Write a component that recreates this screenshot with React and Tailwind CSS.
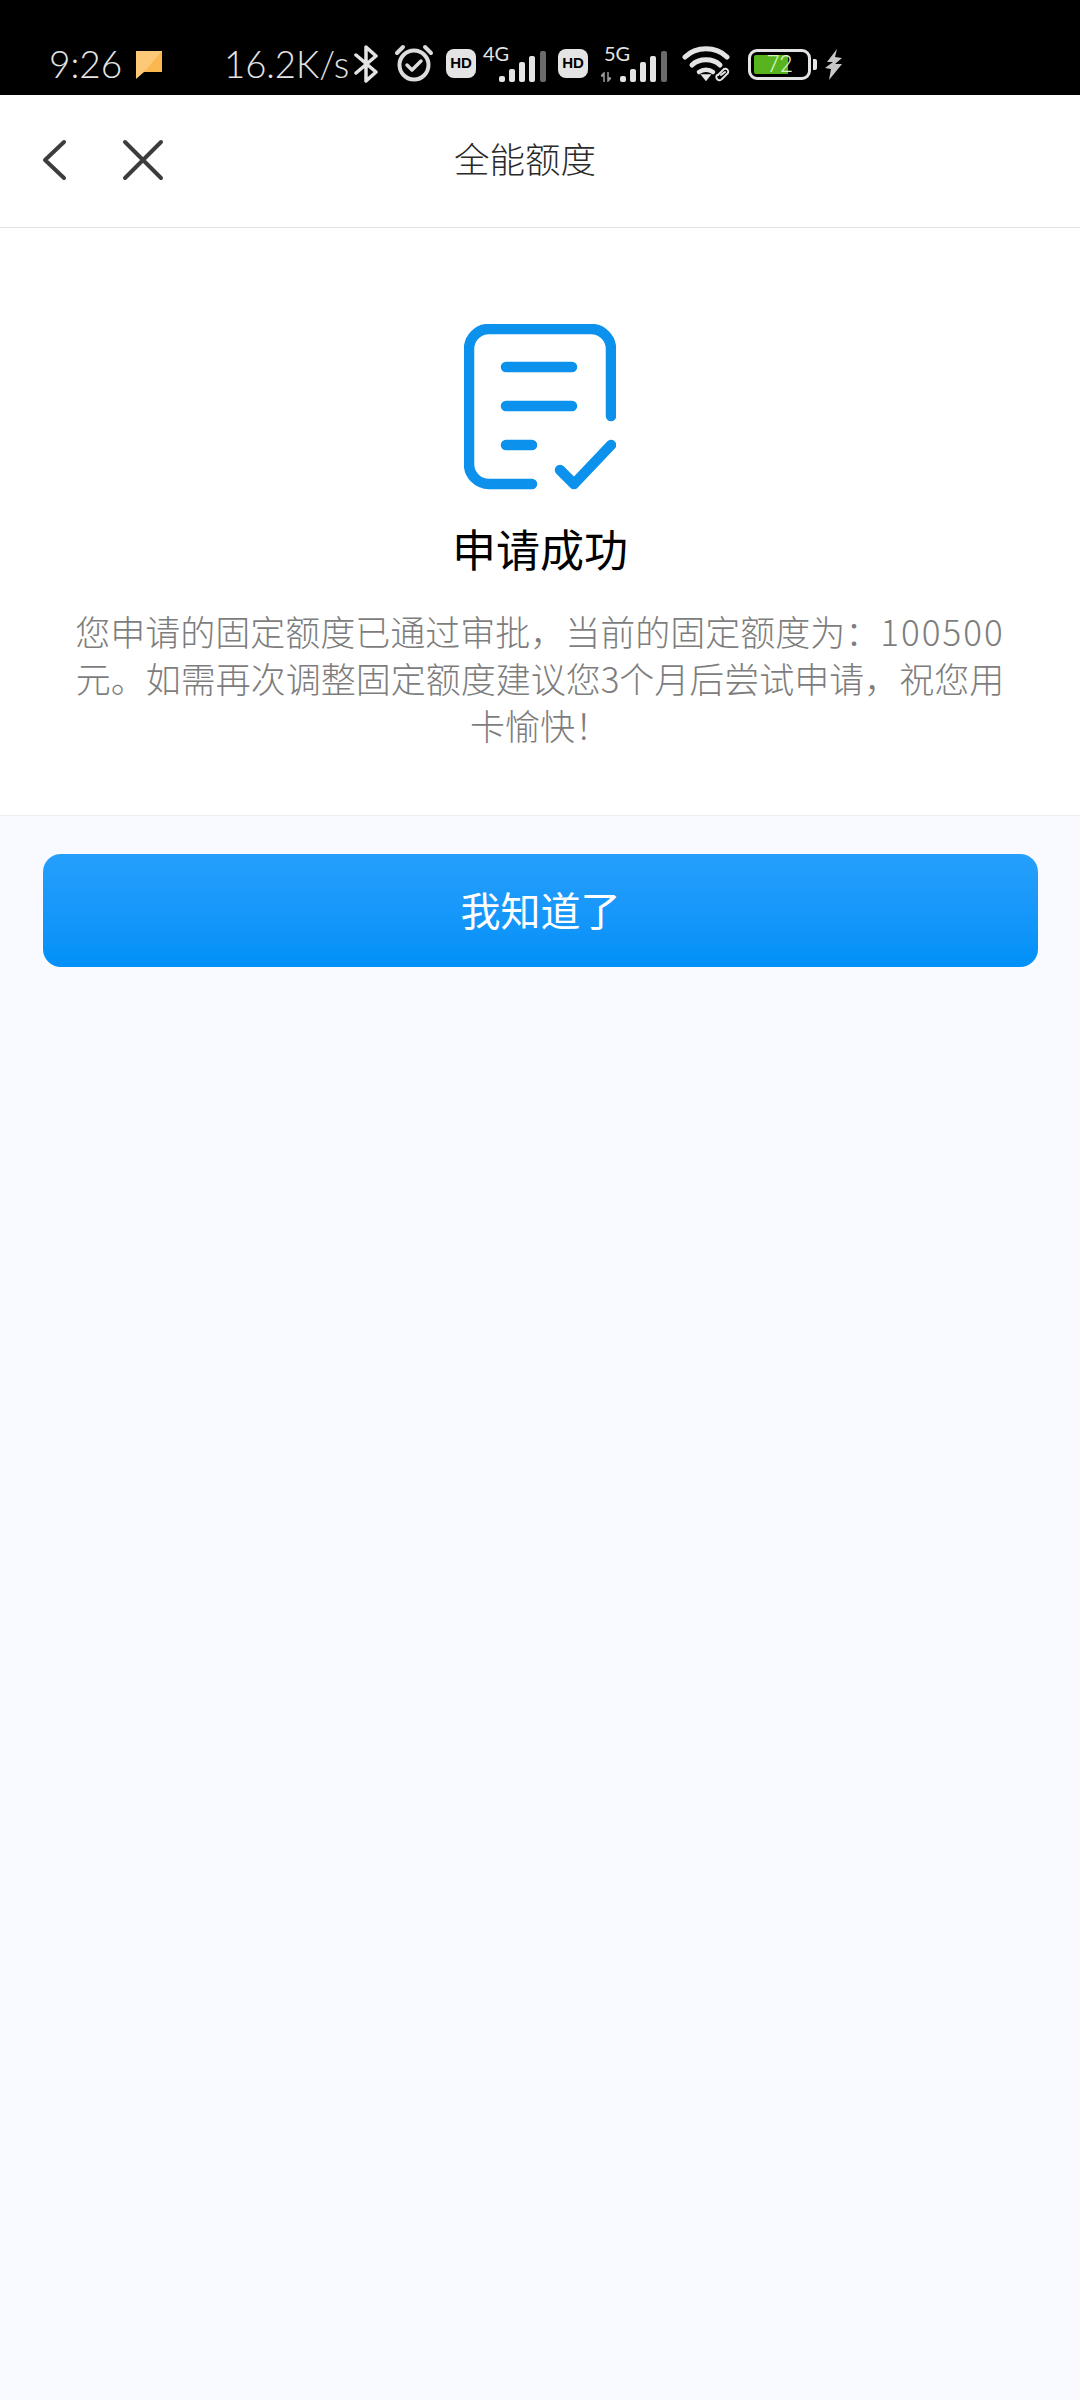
function Bars({ w, h, bars, dim }) {
  return (
    <svg width={w} height={h} viewBox={`0 0 ${w} ${h}`} className="block">
      {bars.map((b, i) => (
        <rect key={i} x={b[0]} y={h - b[1]} width="6" height={b[1]} rx="2" fill={i === dim ? "#6b6b6b" : "#e4e4e4"} />
      ))}
    </svg>
  );
}

function HD({ cls }) {
  return (
    <div className={`w-[30px] h-[29px] rounded-[8px] bg-[#e4e4e4] text-black text-[15px] font-bold flex items-center justify-center font-['Liberation_Sans',sans-serif] ${cls}`}>
      HD
    </div>
  );
}

function StatusBar() {
  return (
    <div className="h-[95px] bg-black flex items-start pt-[44px] pl-[49px] text-[#e4e4e4] font-['Lato',sans-serif]">
      <span className="text-[37px] leading-[40px] font-light w-[76px]">9:26</span>
      <svg width="26" height="28" viewBox="0 0 26 28" className="ml-[11px] mt-[7px] block">
        <path d="M0 0 H26 V21 H8 L0 28 Z" fill="#fdc877" />
        <path d="M26 0 V21 H8 Z" fill="#fbb750" />
      </svg>
      <span className="ml-[62px] text-[36.5px] leading-[40px] font-light w-[124px] whitespace-nowrap">16.2K/s</span>
      <svg width="24" height="40" viewBox="0 0 24 40" className="ml-[6px] block" fill="none" stroke="#e4e4e4" strokeWidth="3.5">
        <path d="M2 11 L22 28 L12 37 V3 L22 12 L2 29" strokeLinejoin="round" strokeLinecap="round" />
      </svg>
      <svg width="40" height="38" viewBox="0 0 40 38" className="ml-[16px] block" fill="none" stroke="#dcdcdc" strokeWidth="4" strokeLinecap="round" strokeLinejoin="round">
        <circle cx="20" cy="21" r="14.5" />
        <path d="M13 21 L18 26 L27 17" strokeWidth="3.5" />
        <path d="M3 9 L9 3 M37 9 L31 3" />
      </svg>
      <HD cls="ml-[12px] mt-[5px]" />
      <div className="relative w-[63px] h-[38px] ml-[7px]">
        <span className="absolute left-[0px] top-[0px] text-[20px] leading-[18px]">4G</span>
        <div className="absolute right-[0px] bottom-[0px]">
          <Bars w={47} h={31} bars={[[0, 6], [10, 13], [20, 20], [30, 26], [41, 31]]} dim={4} />
        </div>
      </div>
      <HD cls="ml-[12px] mt-[5px]" />
      <div className="relative w-[66px] h-[38px] ml-[13px]">
        <span className="absolute left-[3px] top-[0px] text-[20px] leading-[18px]">5G</span>
        <svg width="10" height="10" viewBox="0 0 10 10" className="absolute left-[0px] bottom-[0px]">
          <path d="M3 1 L0 4 H3 Z M3 4 V10 M7 0 V7 M7 9 L10 6 H7 Z" stroke="#9a9a9a" strokeWidth="1.5" fill="#9a9a9a" />
        </svg>
        <div className="absolute right-[0px] bottom-[0px]">
          <Bars w={54} h={31} bars={[[7, 6], [17, 13], [27, 20], [37, 26], [48, 31]]} dim={4} />
        </div>
      </div>
      <svg width="50" height="38" viewBox="0 0 50 38" className="ml-[15px] block" fill="none" stroke="#e4e4e4" strokeLinecap="round">
        <path d="M3 13 C14 2 34 2 45 13" strokeWidth="5" />
        <path d="M10 21 C17 14 31 14 38 21" strokeWidth="5" />
        <path d="M17 28 C21 25 27 25 31 28" strokeWidth="4.5" />
        <path d="M20 31 L24 36 L28 31 Z" fill="#e4e4e4" strokeWidth="1.5" />
        <path d="M36 31 L42 25 A3 3 0 0 1 46 29 L40 35 A3 3 0 0 1 35 31 M39 31 L43 28" strokeWidth="2" />
      </svg>
      <div className="ml-[16px] w-[63px] h-[31px] mt-[5px] rounded-[9px] border-[3px] border-[#e4e4e4] relative p-[3px] flex">
        <div className="w-[34px] h-full bg-[#57b41f] rounded-l-[2px]"></div>
        <span className="absolute left-[16px] top-[0px] text-[23px] leading-[25px] font-['Roboto',sans-serif] font-light text-[#d9f5c4]">72</span>
      </div>
      <div className="w-[4px] h-[11px] bg-[#e4e4e4] rounded-r-[2px] ml-[2px] mt-[15px]"></div>
      <svg width="18" height="31" viewBox="0 0 18 31" className="ml-[8px] mt-[5px] block">
        <path d="M12 0 L2 13 L8 13 L0 19 L6 20 L4 31 L17 15 L10 15 L17 9 L10 8 Z" fill="#c8c8c8" />
      </svg>
    </div>
  );
}

function Header() {
  return (
    <div className="relative h-[133px] bg-white border-b border-[#e2e2e2] flex items-center justify-center pr-[30px] pb-[6px]">
      <div className="absolute left-[41px] top-[44px] flex items-start">
        <svg width="28" height="44" viewBox="0 0 28 44" fill="none" stroke="#3d3d3d" strokeWidth="4" strokeLinecap="round" strokeLinejoin="round" className="block">
          <path d="M23 3 L4 21 L23 39" />
        </svg>
        <svg width="44" height="44" viewBox="0 0 44 44" fill="none" stroke="#3d3d3d" strokeWidth="4" strokeLinecap="round" className="block ml-[52px]">
          <path d="M4 3 L40 39 M40 3 L4 39" />
        </svg>
      </div>
      <span className="text-[35.5px] leading-[48px] text-[#2a2a2a] font-['Noto_Sans_CJK_SC',sans-serif] font-light">全能额度</span>
    </div>
  );
}

export default function App() {
  return (
    <div className="w-[1080px] h-[2400px] bg-[#f8faff] font-['Noto_Sans_CJK_SC',sans-serif] overflow-hidden">
      <StatusBar />
      <Header />
      <div className="bg-white border-b border-[#ebedf0] h-[588px] flex flex-col items-center pt-[96px]">
        <svg width="152" height="166" viewBox="464 324 152 166" fill="none" stroke="#0c92ec" strokeWidth="10.5" strokeLinecap="round" strokeLinejoin="round" className="block">
          <path d="M611 416 V349 A20 20 0 0 0 591 329 H489 A20 20 0 0 0 469 349 V464 A20 20 0 0 0 489 484 H532" />
          <path d="M506 367 H572 M506 406 H572 M506 445 H532" />
          <path d="M560 470 L574 484 L611 445" />
        </svg>
        <h1 className="mt-[28px] text-[44px] leading-[60px] text-black font-normal">申请成功</h1>
        <p className="mt-[29px] w-[940px] text-center text-[35px] leading-[47px] text-[#7d7d7d] font-light">
          您申请的固定额度已通过审批，当前的固定额度为：<span className="tracking-[2px]">100500</span>元。如需再次调整固定额度建议您3个月后尝试申请，祝您用卡愉快！
        </p>
      </div>
      <div className="pl-[43px] pr-[42px] pt-[38px]">
        <div className="h-[113px] rounded-[18px] bg-gradient-to-b from-[#259ffc] to-[#0090f8] flex items-center justify-center pb-[4px] text-white text-[40px] font-normal">
          我知道了
        </div>
      </div>
    </div>
  );
}
